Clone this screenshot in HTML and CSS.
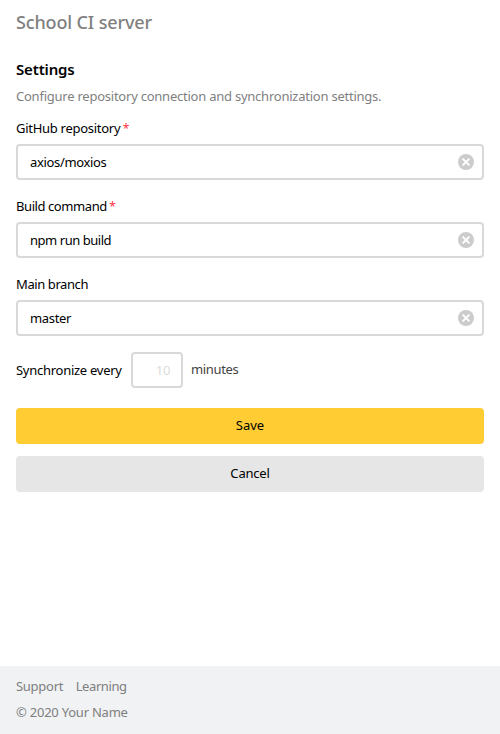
FILE: index.html
```html
<!DOCTYPE html>
<html lang="en">
<head>
<meta charset="utf-8">
<title>School CI server</title>
<link rel="stylesheet" href="styles.css">
</head>
<body>
<header class="header"><span class="t-logo">School CI server</span></header>
<main class="main">
<h1 class="title"><span class="t-title">Settings</span></h1>
<p class="lead"><span class="t-lead">Configure repository connection and synchronization settings.</span></p>
<form class="form">
<div class="field">
<label class="label"><span class="t-repo">GitHub repository</span><span class="req">*</span></label>
<div class="input"><span class="t-v1">axios/moxios</span><svg class="clear" viewBox="0 0 16 16"><circle cx="8" cy="8" r="8"/><path d="M4.6 4.6l6.8 6.8M11.4 4.6l-6.8 6.8"/></svg></div>
</div>
<div class="field">
<label class="label"><span class="t-build">Build command</span><span class="req">*</span></label>
<div class="input"><span class="t-v2">npm run build</span><svg class="clear" viewBox="0 0 16 16"><circle cx="8" cy="8" r="8"/><path d="M4.6 4.6l6.8 6.8M11.4 4.6l-6.8 6.8"/></svg></div>
</div>
<div class="field">
<label class="label"><span class="t-branch">Main branch</span></label>
<div class="input"><span class="t-v3">master</span><svg class="clear" viewBox="0 0 16 16"><circle cx="8" cy="8" r="8"/><path d="M4.6 4.6l6.8 6.8M11.4 4.6l-6.8 6.8"/></svg></div>
</div>
<div class="sync"><span class="t-sync">Synchronize every</span><div class="period">10</div><span class="t-min">minutes</span></div>
<div class="button save"><span class="t-save">Save</span></div>
<div class="button cancel"><span class="t-cancel">Cancel</span></div>
</form>
</main>
<footer class="footer">
<nav class="links"><span class="t-support">Support</span><span class="t-learn">Learning</span></nav>
<div class="copy"><span class="t-copy">© 2020 Your Name</span></div>
</footer>
</body>
</html>
```
FILE: styles.css
```css
* { box-sizing: border-box; }
body { margin: 0; height: 734px; display: flex; flex-direction: column; font: 13px/20px "Noto Sans", sans-serif; color: #000; background: #fff; }
.header { padding: 10px 16px 0; font-size: 18px; line-height: 24px; height: 57px; color: #7f7f7f; font-weight: 500; }
.main { flex: 1; padding: 0 16px; }
.title { margin: 0; font-size: 15px; line-height: 24px; font-weight: 600; }
.lead { margin: 5px 0 12px; color: #7f7f7f; line-height: 20px; }
.field { margin-bottom: 16px; }
.label { display: block; height: 26px; line-height: 20px; }
.req { color: #ff3344; margin-left: 2.5px; font-size: 12px; }
.input { height: 36px; border: 2px solid #d9d9d9; border-radius: 4px; padding: 0 8px 0 12px; display: flex; align-items: center; justify-content: space-between; }
.clear { width: 16px; height: 16px; fill: #ccc; stroke: none; }
.clear path { stroke: #fff; stroke-width: 2; }
.sync { display: flex; align-items: center; height: 36px; margin-bottom: 20px; }
.period { width: 52px; height: 36px; margin-right: 8px; border: 2px solid #d9d9d9; border-radius: 4px; padding-right: 10.5px; line-height: 32px; text-align: right; color: #dcdcdc; }
.button { height: 36px; line-height: 35px; border-radius: 4px; text-align: center; margin-bottom: 12px; }
.save { background: #ffcc33; }
.cancel { background: #e6e6e6; }
.footer { height: 68px; padding: 7px 16px; background: #f0f2f4; color: #7f7f7f; line-height: 26px; }
.links { display: flex; gap: 12.5px; }

/* Tracking, tightened per text */
.t-logo { letter-spacing: -0.14px; }
.t-title { letter-spacing: -0.15px; }
.t-lead { letter-spacing: -0.235px; }
.t-repo { letter-spacing: -0.28px; }
.t-build { letter-spacing: -0.42px; }
.t-branch { letter-spacing: -0.41px; }
.t-v1 { letter-spacing: -0.34px; }
.t-v2 { letter-spacing: -0.46px; }
.t-v3 { letter-spacing: -0.35px; }
.t-sync { flex: none; width: 115px; letter-spacing: -0.27px; }
.t-min { padding-bottom: 2px; letter-spacing: -0.35px; color: #444; }
.t-cancel { letter-spacing: -0.2px; }
.t-support { letter-spacing: -0.28px; }
.t-learn { letter-spacing: -0.4px; }
.t-copy { letter-spacing: -0.23px; }
```
